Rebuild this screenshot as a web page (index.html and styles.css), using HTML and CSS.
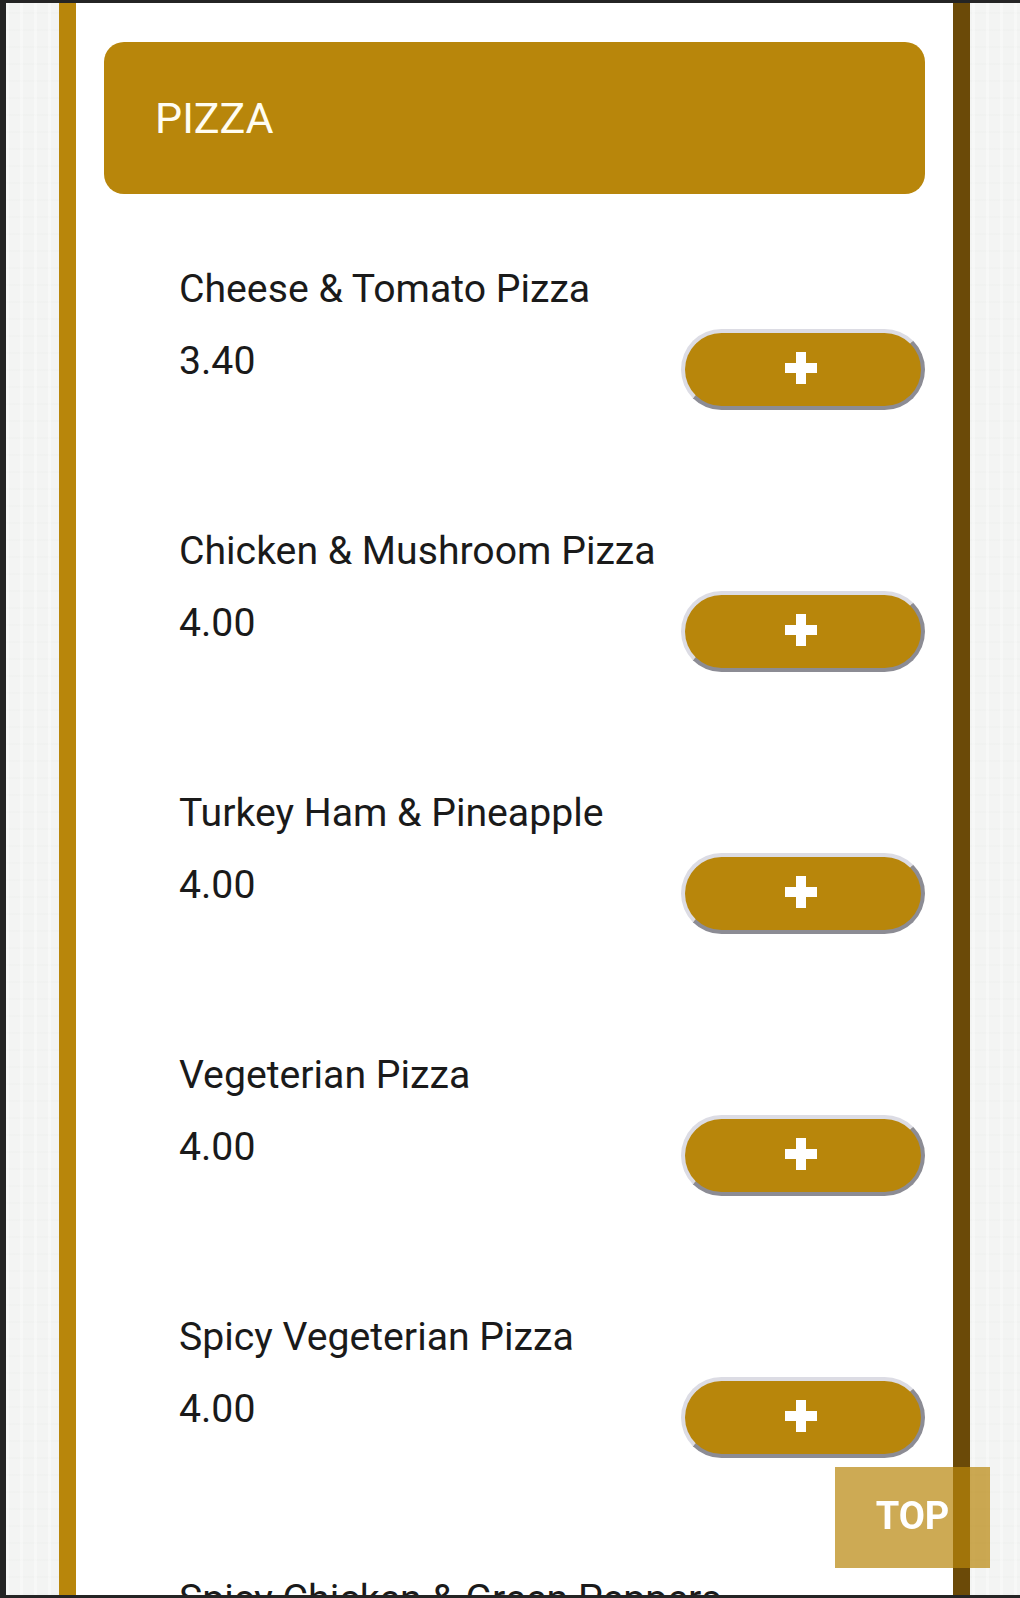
FILE: index.html
```html
<!DOCTYPE html>
<html>
<head>
  <meta charset="UTF-8">
  <link rel="stylesheet" href="styles.css">
</head>
<body>
  <div class="screen">
    <div class="menu">
      <div class="category">PIZZA</div>

      <div class="items">
        <div class="item">
          <div class="name">Cheese &amp; Tomato Pizza</div>
          <div class="row">
            <span class="price">3.40</span>
            <button class="add"><svg viewBox="0 0 32 32" width="32" height="32"><rect x="11" y="0" width="10" height="32"/><rect x="0" y="11" width="32" height="10"/></svg></button>
          </div>
        </div>

        <div class="item">
          <div class="name">Chicken &amp; Mushroom Pizza</div>
          <div class="row">
            <span class="price">4.00</span>
            <button class="add"><svg viewBox="0 0 32 32" width="32" height="32"><rect x="11" y="0" width="10" height="32"/><rect x="0" y="11" width="32" height="10"/></svg></button>
          </div>
        </div>

        <div class="item">
          <div class="name">Turkey Ham &amp; Pineapple</div>
          <div class="row">
            <span class="price">4.00</span>
            <button class="add"><svg viewBox="0 0 32 32" width="32" height="32"><rect x="11" y="0" width="10" height="32"/><rect x="0" y="11" width="32" height="10"/></svg></button>
          </div>
        </div>

        <div class="item">
          <div class="name">Vegeterian Pizza</div>
          <div class="row">
            <span class="price">4.00</span>
            <button class="add"><svg viewBox="0 0 32 32" width="32" height="32"><rect x="11" y="0" width="10" height="32"/><rect x="0" y="11" width="32" height="10"/></svg></button>
          </div>
        </div>

        <div class="item">
          <div class="name">Spicy Vegeterian Pizza</div>
          <div class="row">
            <span class="price">4.00</span>
            <button class="add"><svg viewBox="0 0 32 32" width="32" height="32"><rect x="11" y="0" width="10" height="32"/><rect x="0" y="11" width="32" height="10"/></svg></button>
          </div>
        </div>

        <div class="item">
          <div class="name">Spicy Chicken &amp; Green Peppers</div>
          <div class="row">
            <span class="price">4.00</span>
            <button class="add"><svg viewBox="0 0 32 32" width="32" height="32"><rect x="11" y="0" width="10" height="32"/><rect x="0" y="11" width="32" height="10"/></svg></button>
          </div>
        </div>
      </div>
    </div>
  </div>

  <a href="#" class="to-top">TOP</a>
</body>
</html>
```

FILE: styles.css
```css
:root {
  --gold: #b8860b;
  --brown: #6b4a08;
  --paper: #f3f4f3;
}

body {
  margin: 0;
  height: 1598px;
  overflow: hidden;
  background: #242424;
  font-family: Roboto, 'Liberation Sans', Arial, sans-serif;
  color: #1a1a1a;
}

/* 外层纸纹背景 */
.screen {
  margin: 3px 0 0 6px;
  height: 1592px;
  overflow: hidden;
  background-color: var(--paper);
  background-image:
    repeating-linear-gradient(90deg, rgba(255, 255, 255, 0.35) 0 3px, transparent 3px 14px),
    repeating-linear-gradient(0deg, rgba(236, 238, 236, 0.35) 0 2px, transparent 2px 17px);
}

.menu {
  margin: 0 50px 0 53px;
  min-height: 100%;
  box-sizing: border-box;
  padding: 39px 28px;
  background: #fff;
  border-left: 17px solid var(--gold);
  border-right: 17px solid var(--brown);
}

.category {
  height: 152px;
  line-height: 152px;
  padding-left: 51px;
  border-radius: 20px;
  background: var(--gold);
  color: #fffdf2;
  font-size: 43px;
}

.items {
  margin-top: 59px;
  padding-left: 75px;
}

.item {
  padding-bottom: 105px;
}

.name,
.price {
  font-size: 39.2px;
  line-height: 72px;
}

.row {
  display: flex;
  justify-content: space-between;
  align-items: flex-start;
}

.add {
  display: flex;
  align-items: center;
  justify-content: center;
  width: 244px;
  height: 81px;
  margin-top: 4px;
  padding: 0 4px 3px 0;
  box-sizing: border-box;
  background: var(--gold);
  border: 4px solid;
  border-color: #dcdce4 #8c8c94 #8c8c94 #dcdce4;
  border-radius: 41px;
  cursor: pointer;
}

.add svg {
  fill: #fff;
}

/* 回到顶部 */
.to-top {
  position: fixed;
  right: 30px;
  bottom: 30px;
  width: 155px;
  height: 101px;
  padding-bottom: 4px;
  box-sizing: border-box;
  display: flex;
  align-items: center;
  justify-content: center;
  background: rgba(184, 134, 11, 0.7);
  color: #fff;
  font-size: 38px;
  font-weight: 700;
  text-decoration: none;
}
```
